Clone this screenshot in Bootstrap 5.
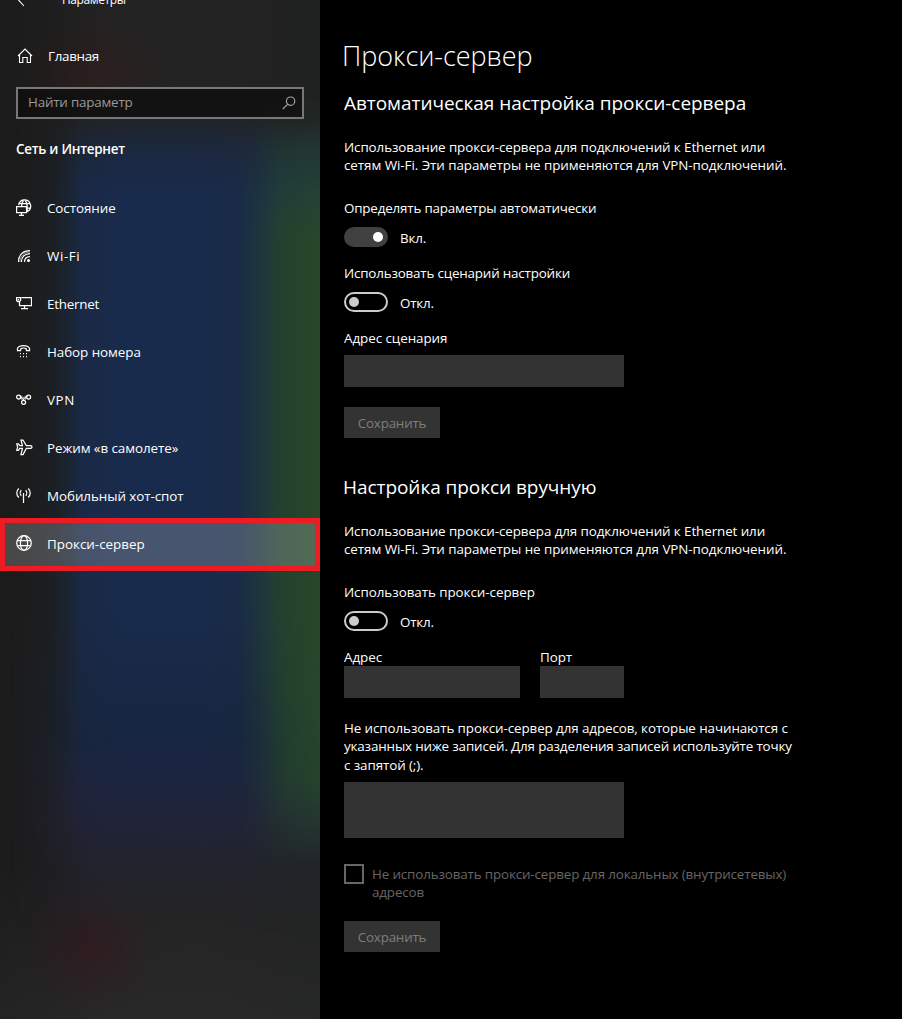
<!DOCTYPE html>
<html lang="ru" data-bs-theme="dark">
<head>
<meta charset="utf-8">
<meta name="viewport" content="width=device-width, initial-scale=1">
<title>Параметры</title>
<link rel="stylesheet" href="https://cdn.jsdelivr.net/npm/bootstrap@5.3.0/dist/css/bootstrap.min.css">
<style>
body{background:#000;color:#fff;font-family:"Open Sans","Noto Sans",sans-serif;font-size:13.4px;line-height:18px;width:902px;height:1019px;overflow:hidden}
.side{width:320px;height:1019px;overflow:hidden;isolation:isolate;background:
 radial-gradient(ellipse 80px 65px at 95px 75px,rgba(64,24,24,.35),rgba(64,24,24,.13) 55%,transparent),
 radial-gradient(ellipse 70px 65px at 90px 950px,rgba(56,18,28,.5),rgba(56,18,28,.2) 55%,transparent),
 linear-gradient(transparent 850px,rgba(48,48,48,.4)),
 linear-gradient(90deg,#1b1b1b,#1d1d1d 45px,#222 100px,#232323 200px,#202121)}
.side::before,.side::after{content:"";position:absolute;inset:0;z-index:-1}
.side::before{background:
 linear-gradient(transparent 600px,rgba(22,34,56,.55) 740px,rgba(36,34,60,.7) 820px),
 linear-gradient(90deg,#1b1e2200 10px,#1b1f25 45px,#1a2430 62px,#1a2945 82px,#192b4c 120px,#192b4c 205px,#1a2c47 238px,#1d3143 258px,#203c3c 280px,#244038);
 -webkit-mask-image:linear-gradient(transparent 90px,rgba(0,0,0,.2) 120px,rgba(0,0,0,.7) 150px,#000 190px,#000 770px,rgba(0,0,0,.75) 820px,rgba(0,0,0,.3) 870px,transparent 930px),linear-gradient(90deg,transparent 10px,#000 80px);
 -webkit-mask-composite:source-in}
.side::after{background:linear-gradient(90deg,transparent 240px,rgba(35,66,45,.3) 264px,rgba(36,68,42,.85) 290px,#27472a);
 -webkit-mask-image:linear-gradient(transparent 175px,#000 240px,#000 650px,rgba(0,0,0,.85) 780px,transparent 870px)}
.titlebar{height:32px;margin-top:-16px;padding-left:16px}
.titlebar span{font-size:12px;margin-left:28px;letter-spacing:-.4px}
.home{height:40px;margin-top:20px;padding-left:16px;gap:14px;letter-spacing:-.3px}
.find{margin:11px 16px 0;width:288px;height:32px;border:2px solid #777;background:rgba(12,12,12,.72);color:#999;padding:0 6px 2px 10px;letter-spacing:-.2px}
.find svg{stroke:#aaa;margin-top:2px}
.group-name{font-weight:600;margin:21px 0 0 16px;letter-spacing:-.25px}
.menu{margin-top:26px}
.menu .nav-link{height:48px;padding:0 0 0 16px;color:#fff;gap:15px;letter-spacing:-.06px}
.menu .nav-link svg{margin-top:-2px;stroke-width:1.25}
.menu .nav-link.active{background:rgba(255,255,255,.2);letter-spacing:0}
.menu .nav-link.active::after{content:"";position:absolute;inset:-2px 0 -3px;border:5px solid #ed1c24}
.menu .wide{letter-spacing:.6px}
.menu .tight{letter-spacing:-.25px}
svg{flex:none;fill:none;stroke:#fff;stroke-width:1.1}
.content{padding:38px 0 0 24px;width:582px}
h1{font-size:27px;font-weight:300;line-height:36px;margin:0 0 0 -2px;letter-spacing:-.05px}
h2{font-size:19px;font-weight:400;line-height:26px;margin:0;letter-spacing:-.05px}
.about{line-height:18.4px;margin:0;white-space:nowrap;letter-spacing:-.09px}
.about .l2{letter-spacing:-.05px}
.about .l3{letter-spacing:-.15px}
.lbl{display:block;height:18px;white-space:nowrap;letter-spacing:-.05px}
.lbl.tight{letter-spacing:-.18px}
.toggle{width:44px;height:20px;border:2px solid #ccc;border-radius:10px;padding:3px}
.toggle i{display:block;width:10px;height:10px;border-radius:50%;background:#ccc}
.toggle.on{background:#414141;border-color:#414141}
.toggle.on i{background:#fff;margin-left:auto}
.switch-row{height:20px;gap:12px}
.switch-row b{font-weight:400;margin-top:2px;letter-spacing:-.2px}
.field{display:block;background:#333;border:0;border-radius:0;height:32px;padding:0;resize:none}
.save,.save:disabled{display:block;width:96px;height:31px;border:0;border-radius:0;background:#333;color:#7d7d7d;opacity:1;padding:1px 0 0;font-size:inherit;line-height:18px;letter-spacing:-.2px}
.box{width:20px;height:20px;border:2px solid #666;margin-top:-1px;flex:none}
.local{color:#666;gap:8px;line-height:18.4px;white-space:nowrap;letter-spacing:-.14px}
</style>
</head>
<body>
<div class="d-flex">
<aside class="side position-relative flex-shrink-0">
 <div class="titlebar d-flex align-items-center">
  <svg width="18" height="16" viewBox="0 0 18 16"><path d="M8 2 2.5 8 8 14"/></svg><span>Параметры</span>
 </div>
 <div class="home d-flex align-items-center">
  <svg width="18" height="18" viewBox="0 0 18 18"><path d="M2 9 9 2l7 7M3.5 7.700v7.800h3.300v-5h4.400v5h3.300V7.700"/></svg><span>Главная</span>
 </div>
 <div class="find d-flex align-items-center justify-content-between"><span>Найти параметр</span>
  <svg width="14" height="14" viewBox="0 0 14 14"><circle cx="8.600" cy="5.200" r="4.200"/><path d="M5.600 8.300.8 13"/></svg>
 </div>
 <div class="group-name">Сеть и Интернет</div>
 <nav class="menu nav flex-column">
  <a class="nav-link d-flex align-items-center"><svg width="16" height="17" viewBox="0 0 16 17"><path d="M2.500 6C3.200 2.800 5.300.8 8.300.8a6.300 6.300 0 0 1 2.700 12M3.500 4.500h10.300M11 9h3.500M7.800 1C6.200 2.500 5.800 4 5.600 7M8.800 1c2 2 2.800 6 2.200 11.500"/><path d="M.6 7.500h9.900v6H.6zM5.500 13.500V16M3 16.300h5"/></svg><span>Состояние</span></a>
  <a class="nav-link d-flex align-items-center"><svg width="16" height="16" viewBox="0 0 16 16"><path d="M2.500 15C2.500 8 7 3.500 14 3.500M5.400 15c0-5 3.500-8.500 8.600-8.500M8.500 15c0-3.500 2-5.500 5.500-5.500"/><path d="M4 15C4 9.500 8 5 14 5" stroke-width=".5"/><circle cx="12.500" cy="13.500" r="1.500" fill="#fff" stroke="none"/></svg><span class="wide">Wi-Fi</span></a>
  <a class="nav-link d-flex align-items-center"><svg width="16" height="16" viewBox="0 0 16 16"><path d="M5.500 2.500h10v8H3.500V6.500M8.500 10.500v3M5 13.500h7M.6 2.500h4v3L3.500 6.500h-2L.6 5.500zM2.500 4v1.500"/></svg><span class="tight">Ethernet</span></a>
  <a class="nav-link d-flex align-items-center"><svg width="16" height="16" viewBox="0 0 16 16"><path d="M1.500 7.500V5.200C3.500 1.700 11.500 1.700 13.500 5.200V7.500h-3L10 5.500C9 5 6 5 5 5.500L4.500 7.500z"/><path d="M4 10.500h7.500M4 13.500h7.500" stroke-dasharray="1 2"/></svg><span>Набор номера</span></a>
  <a class="nav-link d-flex align-items-center"><svg width="16" height="16" viewBox="0 0 16 16"><circle cx="2.600" cy="6" r="2"/><circle cx="12.600" cy="6" r="2"/><circle cx="7.600" cy="11.300" r="2"/><path d="m3.500 4.500 3.200 5M4.800 5.500l3 3.800M11.600 4.500 8.500 9.500M10.500 5.500 6.500 9.500M4.700 4.500 8 7.500M10.500 4.500 7 7.500" stroke-width=".8"/></svg><span class="wide">VPN</span></a>
  <a class="nav-link d-flex align-items-center"><svg width="17" height="17" viewBox="0 0 17 17"><path d="M5 1h2l3.300 5.600h4.200c2 0 2 2.800 0 2.800h-4.200L7 15.500H5l1.400-6.100H3.800L2.400 11.300H.8L1.600 8 .8 4.800h1.600l1.400 1.800h2.600z"/></svg><span style="margin-left:-1px">Режим «в самолете»</span></a>
  <a class="nav-link d-flex align-items-center"><svg width="16" height="16" viewBox="0 0 16 16"><path d="M7.500 6v10M5.300 3.300c-1.400 1.500-1.400 4 0 5.400M9.700 3.300c1.400 1.500 1.400 4 0 5.400M2.800 1.500c-2.700 2.500-2.700 6.500 0 9M12.200 1.500c2.700 2.500 2.700 6.500 0 9"/></svg><span>Мобильный хот-спот</span></a>
  <a class="nav-link active position-relative d-flex align-items-center"><svg width="16" height="16" viewBox="0 0 16 16"><circle cx="8" cy="8" r="7.300"/><ellipse cx="8" cy="8" rx="3.600" ry="7.300"/><path d="M1.500 5.500h13M1.500 10.500h13"/></svg><span>Прокси-сервер</span></a>
 </nav>
</aside>
<main class="content">
 <h1>Прокси-сервер</h1>
 <section style="margin-top:16px">
  <h2>Автоматическая настройка прокси-сервера</h2>
  <p class="about" style="margin-top:22px">Использование прокси-сервера для подключений к Ethernet или<br><span class="l2">сетям Wi-Fi. Эти параметры не применяются для VPN-подключений.</span></p>
  <span class="lbl tight" style="margin-top:24px">Определять параметры автоматически</span>
  <div class="switch-row d-flex align-items-center" style="margin-top:10px"><span class="toggle on"><i></i></span><b>Вкл.</b></div>
  <span class="lbl tight" style="margin-top:17px">Использовать сценарий настройки</span>
  <div class="switch-row d-flex align-items-center" style="margin-top:10px"><span class="toggle"><i></i></span><b>Откл.</b></div>
  <span class="lbl" style="margin-top:17px">Адрес сценария</span>
  <input class="field" style="width:280px;margin-top:8px" aria-label="Адрес сценария">
  <button class="btn save" style="margin-top:20px" disabled>Сохранить</button>
 </section>
 <section style="margin-top:36px">
  <h2 style="margin-left:-1px">Настройка прокси вручную</h2>
  <p class="about" style="margin-top:22px">Использование прокси-сервера для подключений к Ethernet или<br><span class="l2">сетям Wi-Fi. Эти параметры не применяются для VPN-подключений.</span></p>
  <span class="lbl" style="margin-top:24px">Использовать прокси-сервер</span>
  <div class="switch-row d-flex align-items-center" style="margin-top:10px"><span class="toggle"><i></i></span><b>Откл.</b></div>
  <div class="d-flex" style="gap:20px;margin-top:17px">
   <div><span class="lbl">Адрес</span><input class="field" style="width:176px" aria-label="Адрес"></div>
   <div><span class="lbl">Порт</span><input class="field" style="width:84px" aria-label="Порт"></div>
  </div>
  <p class="about" style="margin-top:21px;line-height:18.7px">Не использовать прокси-сервер для адресов, которые начинаются с<br><span class="l3">указанных ниже записей. Для разделения записей используйте точку</span><br>с запятой (;).</p>
  <textarea class="field" style="width:280px;height:56px;margin-top:7px" aria-label="Исключения"></textarea>
  <div class="local d-flex" style="margin-top:27px"><span class="box"></span><span>Не использовать прокси-сервер для локальных (внутрисетевых)<br>адресов</span></div>
  <button class="btn save" style="margin-top:19px" disabled>Сохранить</button>
 </section>
</main>
</div>
<script src="https://cdn.jsdelivr.net/npm/bootstrap@5.3.0/dist/js/bootstrap.bundle.min.js"></script>
</body>
</html>
